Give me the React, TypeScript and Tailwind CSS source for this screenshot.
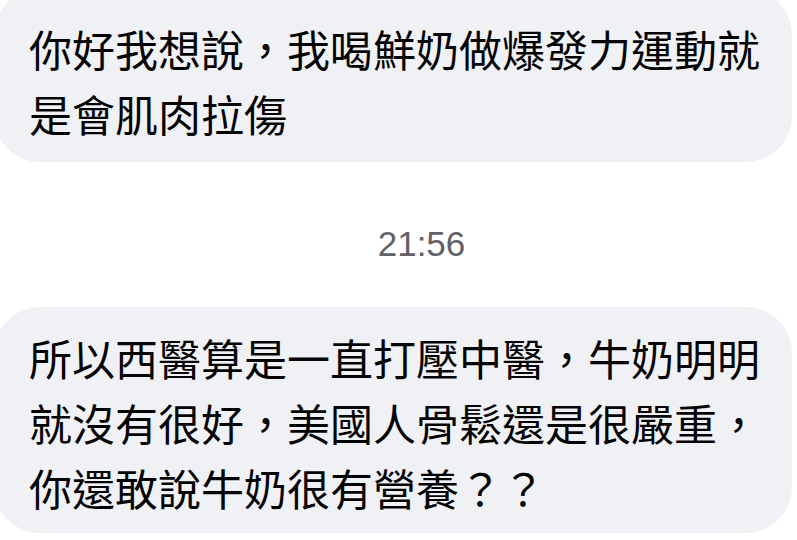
import React from "react";

const cjk = { fontFamily: '"Noto Sans CJK TC", "Noto Sans CJK SC", sans-serif' };

export default function App() {
  return (
    <div className="w-[797px] h-[540px] overflow-hidden bg-white">
      <div className="flex flex-col">
        <div
          className="mt-[-11px] ml-[-6px] w-[798px] h-[173px] rounded-[46px] bg-[#f0f1f5] pl-[35px] pt-[27px] text-[43px] leading-[65px] text-[#050505]"
          style={cjk}
        >
          <div>你好我想說，我喝鮮奶做爆發力運動就</div>
          <div>是會肌肉拉傷</div>
        </div>
        <div className="h-[145px] flex items-center justify-center pl-[46px] pt-[18px]">
          <span
            className="text-[35px] leading-none text-[#606266]"
            style={{ fontFamily: '"Liberation Sans", Arial, sans-serif' }}
          >
            21:56
          </span>
        </div>
        <div
          className="ml-[-6px] w-[798px] h-[226px] rounded-[46px] bg-[#f0f1f5] pl-[35px] pt-[18px] text-[43px] leading-[65px] text-[#050505]"
          style={cjk}
        >
          <div>所以西醫算是一直打壓中醫，牛奶明明</div>
          <div>就沒有很好，美國人骨鬆還是很嚴重，</div>
          <div>你還敢說牛奶很有營養？？</div>
        </div>
      </div>
    </div>
  );
}
